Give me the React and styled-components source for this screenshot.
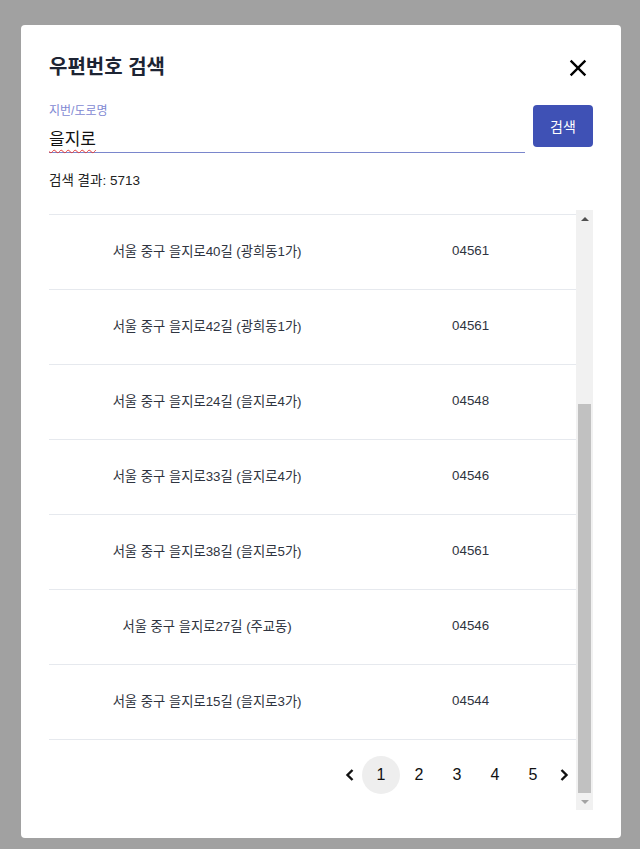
import React from "react";
import styled, { createGlobalStyle } from "styled-components";

const rows = [
  { address: "서울 중구 을지로40길 (광희동1가)", zip: "04561" },
  { address: "서울 중구 을지로42길 (광희동1가)", zip: "04561" },
  { address: "서울 중구 을지로24길 (을지로4가)", zip: "04548" },
  { address: "서울 중구 을지로33길 (을지로4가)", zip: "04546" },
  { address: "서울 중구 을지로38길 (을지로5가)", zip: "04561" },
  { address: "서울 중구 을지로27길 (주교동)", zip: "04546" },
  { address: "서울 중구 을지로15길 (을지로3가)", zip: "04544" },
];

const pages = [1, 2, 3, 4, 5];

function App() {
  return (
    <>
      <GlobalStyle />
      <Backdrop>
        <Dialog>
          <Header>
            <Title>우편번호 검색</Title>
            <CloseButton aria-label="닫기">
              <svg width="28" height="28" viewBox="0 0 24 24">
                <path
                  fill="#000"
                  d="M19 6.41L17.59 5 12 10.59 6.41 5 5 6.41 10.59 12 5 17.59 6.41 19 12 13.41 17.59 19 19 17.59 13.41 12z"
                />
              </svg>
            </CloseButton>
          </Header>

          <SearchRow>
            <Field>
              <Label>지번/도로명</Label>
              <InputBox>
                <InputText>을지로</InputText>
              </InputBox>
            </Field>
            <SearchButton>검색</SearchButton>
          </SearchRow>

          <ResultCount>검색 결과: 5713</ResultCount>

          <ListArea>
            <ListContent>
              <Table>
                {rows.map((row, index) => (
                  <Row key={index}>
                    <AddressCell>{row.address}</AddressCell>
                    <ZipCell>{row.zip}</ZipCell>
                  </Row>
                ))}
              </Table>
              <Pagination>
                <ArrowButton aria-label="이전">
                  <svg width="12" height="14" viewBox="0 0 12 14">
                    <path d="M8.5 2 L3.5 7 L8.5 12" fill="none" stroke="#111" strokeWidth="2.4" />
                  </svg>
                </ArrowButton>
                {pages.map((page) => (
                  <PageButton key={page} $active={page === 1}>
                    {page}
                  </PageButton>
                ))}
                <ArrowButton aria-label="다음">
                  <svg width="12" height="14" viewBox="0 0 12 14">
                    <path d="M3.5 2 L8.5 7 L3.5 12" fill="none" stroke="#111" strokeWidth="2.4" />
                  </svg>
                </ArrowButton>
              </Pagination>
            </ListContent>

            <Scrollbar>
              <ScrollArrow>
                <Triangle $up $color="#505050" />
              </ScrollArrow>
              <Track>
                <Thumb />
              </Track>
              <ScrollArrow>
                <Triangle $color="#a3a3a3" />
              </ScrollArrow>
            </Scrollbar>
          </ListArea>
        </Dialog>
      </Backdrop>
    </>
  );
}

export default App;

const GlobalStyle = createGlobalStyle`
  html, body {
    margin: 0;
    padding: 0;
    background: #a1a1a1;
  }
  * {
    box-sizing: border-box;
  }
  body {
    font-family: "Liberation Sans", "Noto Sans CJK KR", sans-serif;
  }
`;

const Backdrop = styled.div`
  width: 640px;
  height: 849px;
  padding: 25px 19px 11px 21px;
  display: flex;
`;

const Dialog = styled.div`
  width: 600px;
  height: 813px;
  background: #fff;
  border-radius: 4px;
  padding: 28px;
  display: flex;
  flex-direction: column;
`;

const Header = styled.div`
  display: flex;
  align-items: center;
  justify-content: space-between;
  height: 28px;
`;

const Title = styled.h2`
  margin: 0;
  font-size: 20px;
  font-weight: 700;
  color: #1d2433;
  line-height: 28px;
`;

const CloseButton = styled.div`
  width: 28px;
  height: 28px;
  margin-right: 1px;
  margin-top: 2px;
  display: flex;
  align-items: center;
  justify-content: center;
  cursor: pointer;
`;

const SearchRow = styled.div`
  display: flex;
  align-items: flex-start;
  gap: 8px;
  margin-top: 22px;
`;

const Field = styled.div`
  flex: 1;
  display: flex;
  flex-direction: column;
`;

const Label = styled.label`
  font-size: 12px;
  line-height: 16px;
  color: #7f89d3;
`;

const InputBox = styled.div`
  height: 34px;
  border-bottom: 1px solid #7a86cc;
  display: flex;
  align-items: center;
  padding-top: 3px;
`;

const InputText = styled.span`
  font-size: 17px;
  color: #111;
  text-decoration-line: underline;
  text-decoration-style: wavy;
  text-decoration-color: #e53935;
  text-decoration-thickness: 1px;
  text-underline-offset: 4px;
`;

const SearchButton = styled.button`
  width: 60px;
  height: 42px;
  margin-top: 2px;
  border: none;
  border-radius: 4px;
  background: #3f51b5;
  color: #fff;
  font-family: "Liberation Sans", "Noto Sans CJK KR", sans-serif;
  font-size: 14px;
  cursor: pointer;
`;

const ResultCount = styled.div`
  margin-top: 18px;
  font-size: 13.5px;
  line-height: 20px;
  color: #222;
`;

const ListArea = styled.div`
  margin-top: 19px;
  height: 600px;
  display: flex;
`;

const ListContent = styled.div`
  flex: 1;
  overflow: hidden;
  padding-top: 4px;
  display: flex;
  flex-direction: column;
`;

const Table = styled.div`
  display: flex;
  flex-direction: column;
  border-bottom: 1px solid #e6e9ee;
`;

const Row = styled.div`
  display: flex;
  align-items: center;
  height: 75px;
  padding-bottom: 3px;
  border-top: 1px solid #e6e9ee;
  font-size: 13.3px;
  color: #2f3440;
`;

const AddressCell = styled.div`
  width: 60%;
  text-align: center;
`;

const ZipCell = styled.div`
  width: 40%;
  text-align: center;
`;

const Pagination = styled.div`
  display: flex;
  justify-content: flex-end;
  align-items: center;
  margin-top: 16px;
  height: 38px;
`;

const ArrowButton = styled.div`
  width: 24px;
  height: 38px;
  display: flex;
  align-items: center;
  justify-content: center;
  cursor: pointer;
`;

const PageButton = styled.div`
  width: 38px;
  height: 38px;
  border-radius: 50%;
  display: flex;
  align-items: center;
  justify-content: center;
  font-size: 16px;
  color: #111;
  background: ${(props) => (props.$active ? "#eeeeee" : "transparent")};
  cursor: pointer;
`;

const Scrollbar = styled.div`
  width: 17px;
  background: #f1f1f1;
  display: flex;
  flex-direction: column;
`;

const ScrollArrow = styled.div`
  height: 17px;
  display: flex;
  align-items: center;
  justify-content: center;
`;

const Triangle = styled.div`
  width: 0;
  height: 0;
  border-left: 4px solid transparent;
  border-right: 4px solid transparent;
  ${(props) =>
    props.$up
      ? `border-bottom: 4px solid ${props.$color};`
      : `border-top: 4px solid ${props.$color};`}
`;

const Track = styled.div`
  flex: 1;
  display: flex;
  flex-direction: column;
  justify-content: flex-end;
  padding: 0 2px;
`;

const Thumb = styled.div`
  height: 389px;
  background: #c1c1c1;
`;
